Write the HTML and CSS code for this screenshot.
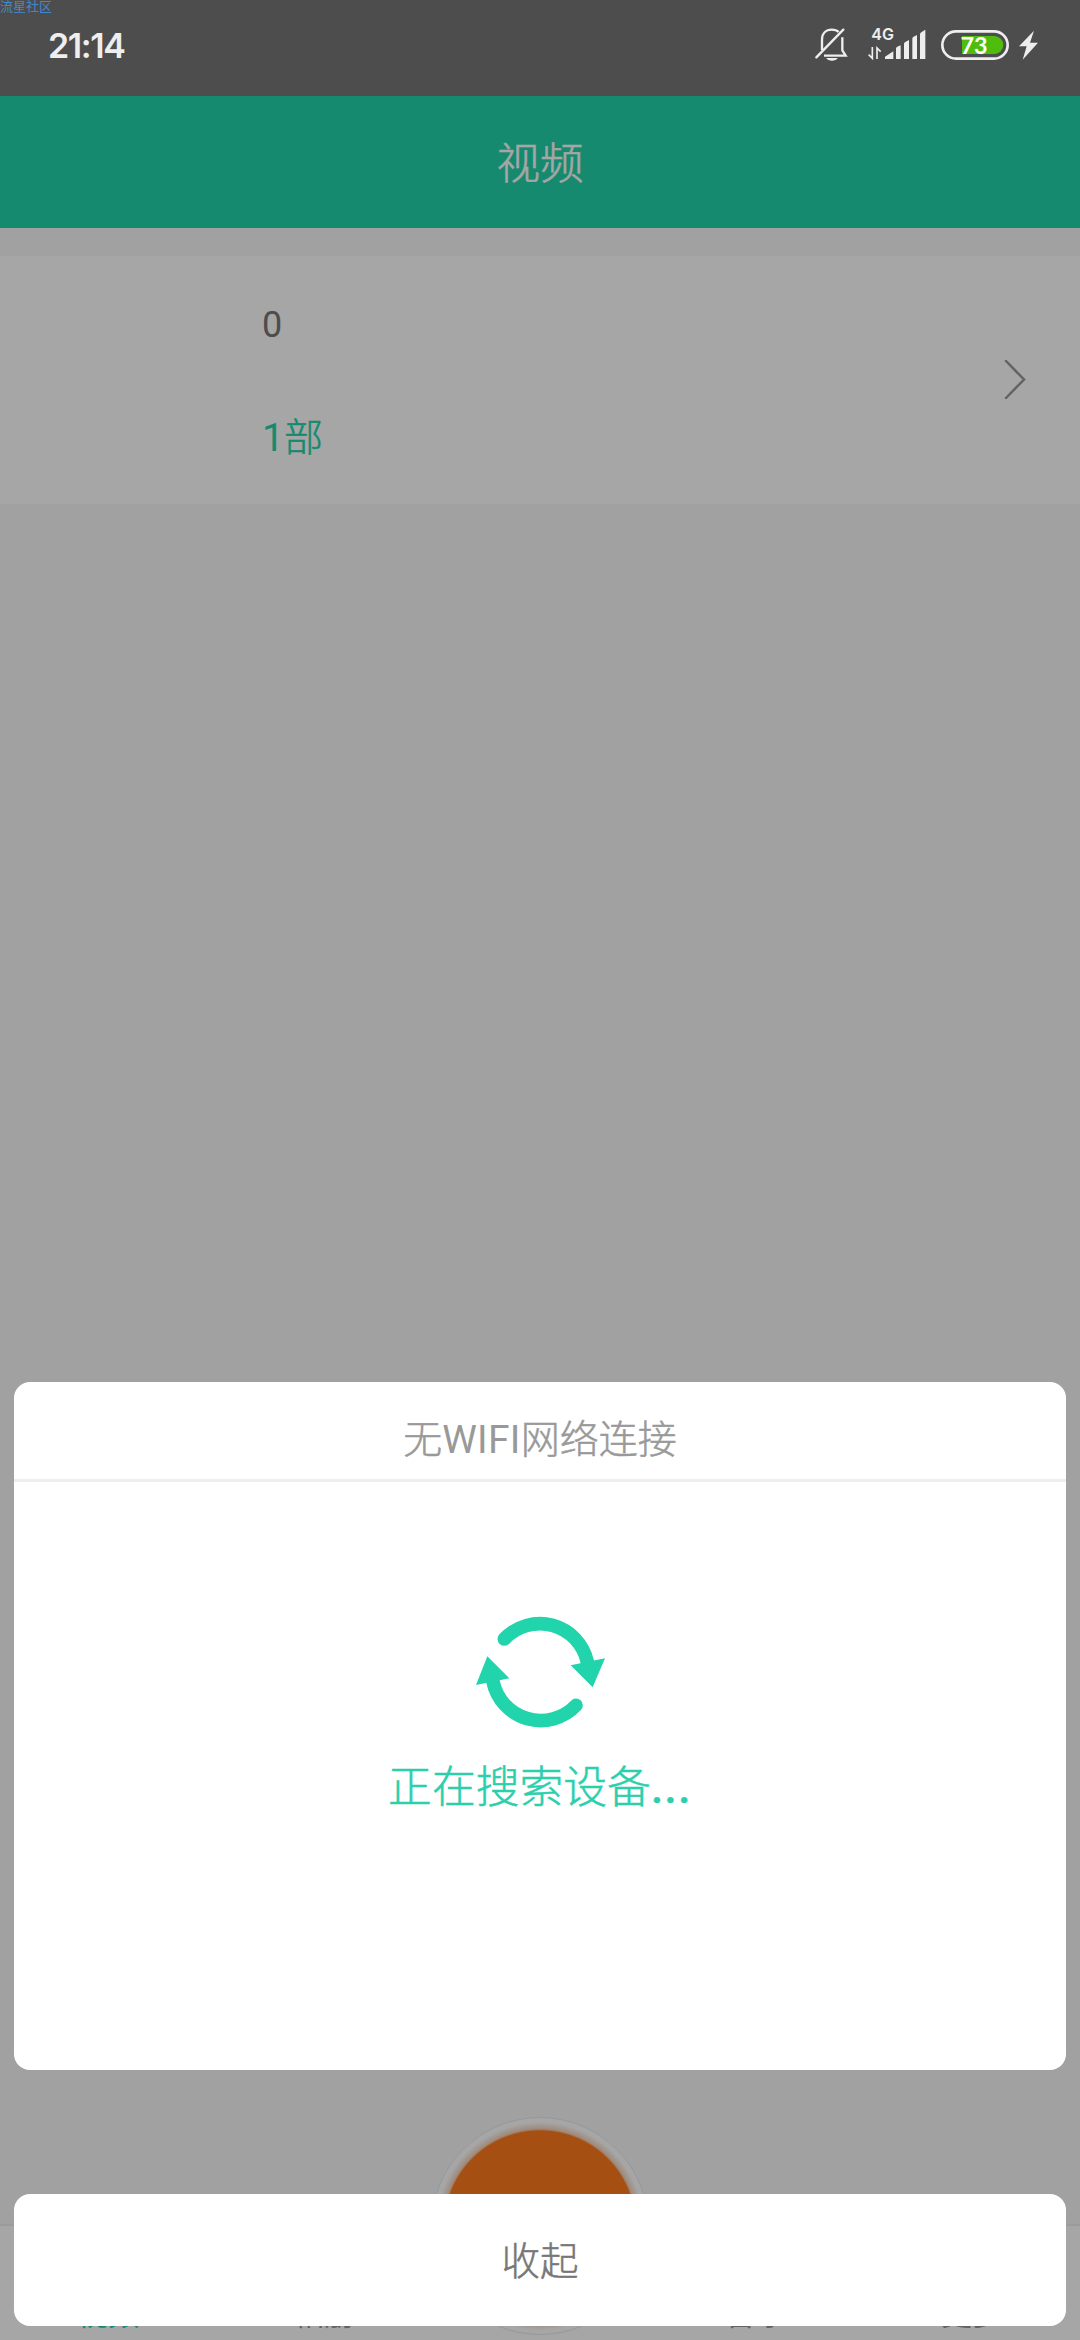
FILE: index.html
```
<!DOCTYPE html>
<html lang="zh-CN">

<head>
    <meta charset="UTF-8" />
    <meta name="viewport" content="width=device-width, initial-scale=1.0">
    <title>视频</title>
    <link rel="stylesheet" href="styles.css">
</head>

<body>
    <div class="status-bar">
        <span class="watermark">流星社区</span>
        <span class="time">21:14</span>
        <div class="status-icons">
            <!-- muted bell -->
            <svg class="icon-bell" viewBox="105 81 96 108">
                <path d="M126 150V119C126 100 138 89 155 89C164 89 171 91 176 96M187 112V151L197 167H132" fill="none" stroke="#eee" stroke-width="7" />
                <path d="M109 172L190 89" stroke="#eee" stroke-width="7" stroke-linecap="round" />
                <path d="M139 174H173C168 185 144 185 139 174Z" fill="#eee" />
            </svg>
            <!-- 4G signal -->
            <svg class="icon-signal" viewBox="264 81 174 108">
                <text x="274" y="121" class="net">4G</text>
                <path d="M277 141V175L266 164M291 177V144L302 155" fill="none" stroke="#eee" stroke-width="5" />
                <path d="M315 177V170L340 154V177Z M348 177V146Q348 142 352 140L362 136V177Z M372 177V132Q372 128 376 126L387 120V177Z M397 177V116Q397 112 401 110L411 105V177Z M420 177V103Q420 98 425 96L436 89V177Z" fill="#eee" />
            </svg>
            <!-- battery -->
            <svg class="icon-battery" viewBox="483 81 204 108">
                <path d="M546 108H643A27 27 0 0 1 643 162H546Z" fill="#50bd0e" />
                <rect x="487" y="94" width="196" height="82" rx="41" fill="none" stroke="#eee" stroke-width="8" />
                <text x="582" y="162" class="level">73</text>
            </svg>
            <svg class="icon-bolt" viewBox="717 81 57 108">
                <path d="M762 92L717 139H740L728 179L774 128H750Z" fill="#eee" />
            </svg>
        </div>
    </div>

    <div class="header">视频</div>

    <div class="content">
        <div class="row">
            <div class="row-text">
                <div class="row-name">0</div>
                <div class="row-count">1<span class="unit">部</span></div>
            </div>
            <svg class="arrow" viewBox="0 0 22 40">
                <path d="M2 2L20 20.500L2 39" />
            </svg>
        </div>
    </div>

    <div class="tab-bar">
        <div class="tab active">视频</div>
        <div class="tab">相册</div>
        <div class="tab"></div>
        <div class="tab">音乐</div>
        <div class="tab">更多</div>
        <div class="round-btn"></div>
    </div>

    <div class="mask">
        <div class="dialog">
            <div class="dialog-title">无<span class="latin">WIFI</span>网络连接</div>
            <div class="dialog-body">
                <svg class="refresh" viewBox="75 75 393 340">
                    <path class="arc" d="M163 147A146 146 0 0 1 412 216M378 346A146 146 0 0 1 129 275" />
                    <path class="head" d="M362 226L465 205L428 292ZM112 199L178 265L78 285Z" />
                </svg>
                <div class="searching">正在搜索设备<span class="dots">...</span></div>
            </div>
        </div>
        <div class="close-btn">收起</div>
    </div>
</body>

</html>
```
FILE: styles.css
```
* {
    box-sizing: border-box;
}

body {
    margin: 0;
    width: 1080px;
    height: 2340px;
    display: flex;
    flex-direction: column;
    position: relative;
    overflow: hidden;
    background-color: #f8f8f8;
    font-family: Roboto, "Noto Sans CJK SC", sans-serif;
    font-weight: 300;
}

.status-bar {
    height: 96px;
    padding: 0 42px 6px 48px;
    display: flex;
    align-items: center;
    justify-content: space-between;
    position: relative;
    z-index: 2;
    background-color: #4d4d4d;
    color: #eee;
}

.watermark {
    position: absolute;
    left: 0;
    top: 0;
    font-size: 13px;
    font-weight: 400;
    line-height: 13px;
    color: #4488cc;
}

.time {
    font-family: Inter, sans-serif;
    font-size: 34px;
    font-weight: 600;
    letter-spacing: -1.4px;
}

.status-icons {
    display: flex;
}

.status-icons svg {
    height: 36px;
    overflow: visible;
}

.icon-bell {
    width: 32px;
    margin-right: 21px;
}

.icon-signal {
    width: 58px;
    margin-right: 15px;
}

.icon-battery {
    width: 68px;
    margin-right: 10px;
}

.icon-bolt {
    width: 19px;
}

.net {
    font: 600 48px Inter, sans-serif;
    fill: #eee;
}

.level {
    font: 700 70px Lato, sans-serif;
    text-anchor: middle;
    fill: #fff;
}

.header {
    height: 132px;
    padding-top: 3px;
    line-height: 132px;
    text-align: center;
    font-size: 43.5px;
    color: #fff;
    background-color: #22d4ab;
}

.header,
.unit,
.dialog-title,
.searching,
.close-btn {
    -webkit-text-stroke-width: 0.5px;
}

.content {
    flex: 1;
    padding-top: 28px;
}

.row {
    height: 248px;
    padding: 0 54px 0 262px;
    display: flex;
    align-items: center;
    justify-content: space-between;
    background-color: #fff;
}

.row-text {
    padding-top: 4px;
    display: flex;
    flex-direction: column;
    gap: 56px;
}

.row-name {
    font-size: 36px;
    font-weight: 400;
    line-height: 56px;
    color: #777;
}

.row-count {
    font-size: 39px;
    font-weight: 400;
    line-height: 58px;
    color: #22d4ab;
}

.unit {
    font-weight: 300;
}

.arrow {
    width: 22px;
    height: 40px;
    margin-bottom: 3px;
    fill: none;
    stroke: #999;
    stroke-width: 2.5;
    stroke-linecap: round;
}

.tab-bar {
    height: 116px;
    display: flex;
    position: relative;
    border-top: 2px solid #eee;
    background-color: #fff;
}

.tab {
    flex: 1;
    padding-top: 67px;
    text-align: center;
    font-size: 31px;
    font-weight: 400;
    line-height: 44px;
    color: #999;
}

.active {
    color: #22d4ab;
}

/* record button, half of it sticks out above the tabs */
.round-btn {
    position: absolute;
    left: 431px;
    top: -109px;
    width: 218px;
    height: 218px;
    border: 1px solid #e6eaee;
    border-radius: 50%;
    background: radial-gradient(circle closest-side, #ff7a1c 0, #ff7a1c 95px, #f4d3bd 97px, #fff 104px);
}

.mask {
    position: absolute;
    left: 0;
    top: 0;
    width: 100%;
    height: 100%;
    padding: 0 14px 14px;
    display: flex;
    flex-direction: column;
    justify-content: flex-end;
    gap: 124px;
    background-color: rgba(0, 0, 0, 0.35);
}

.dialog {
    height: 688px;
    border-radius: 16px;
    background-color: #fff;
}

.dialog-title {
    height: 100px;
    padding-top: 3px;
    line-height: 110px;
    text-align: center;
    font-size: 39px;
    color: #999;
    border-bottom: 3px solid #eee;
}

.latin {
    font-weight: 400;
    letter-spacing: 0.3px;
    -webkit-text-stroke-width: 0;
}

.dialog-body {
    display: flex;
    flex-direction: column;
    align-items: center;
    padding-top: 133px;
}

.refresh {
    width: 131px;
    height: 113.33px;
}

.arc {
    fill: none;
    stroke: #22d4ab;
    stroke-width: 41;
    stroke-linecap: round;
}

.head {
    fill: #22d4ab;
}

.searching {
    margin-top: 28px;
    font-size: 43.8px;
    line-height: 64px;
    color: #2bcfac;
}

.dots {
    font-weight: 500;
    letter-spacing: 1.5px;
}

.close-btn {
    height: 132px;
    padding-top: 2px;
    line-height: 132px;
    text-align: center;
    font-size: 38.5px;
    color: #777;
    border-radius: 16px;
    background-color: #fff;
}
```
